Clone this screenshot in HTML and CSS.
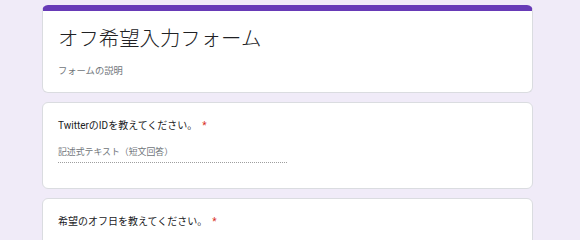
FILE: index.html
```html
<!DOCTYPE html>
<html lang="ja">
<head>
<meta charset="utf-8">
<title>オフ希望入力フォーム</title>
<link rel="stylesheet" href="styles.css">
</head>
<body>
<div class="container">
  <div class="card header-card">
    <div class="title">オフ希望入力フォーム</div>
    <div class="desc">フォームの説明</div>
  </div>
  <div class="card question-card">
    <div class="question">TwitterのIDを教えてください。<span class="req">*</span></div>
    <div class="answer"><span class="placeholder">記述式テキスト（短文回答）</span></div>
  </div>
  <div class="card question-card">
    <div class="question">希望のオフ日を教えてください。<span class="req">*</span></div>
  </div>
</div>
</body>
</html>
```
FILE: styles.css
```css
html, body {
  margin: 0;
  padding: 0;
}
body {
  background: #f0ebf8;
  font-family: Roboto, "Noto Sans CJK JP", sans-serif;
  color: #202124;
}
.container {
  width: 491px;
  padding: 5px 0 0 42px;
  display: flex;
  flex-direction: column;
  gap: 9px;
}
.card {
  background: #fff;
  border: 1px solid #dadce0;
  border-radius: 6px;
  box-sizing: border-box;
  padding: 0 15px;
}
.header-card {
  border-top: 6px solid #673ab7;
  height: 88px;
  padding-top: 16px;
}
.title {
  font-size: 20.4px;
  line-height: 24px;
  font-weight: 300;
  color: #202124;
}
.desc {
  margin-top: 13px;
  font-size: 9.3px;
  line-height: 14px;
  color: #70757a;
}
.question-card {
  height: 87px;
  padding-top: 15px;
}
.question {
  font-size: 10px;
  line-height: 15px;
  color: #202124;
}
.req {
  color: #d93025;
  padding-left: 5px;
}
.answer {
  margin-top: 13px;
  width: 229px;
  padding-bottom: 3px;
  border-bottom: 1px dotted rgba(0, 0, 0, 0.38);
}
.placeholder {
  display: block;
  font-size: 8.9px;
  line-height: 13px;
  color: #70757a;
}
```
